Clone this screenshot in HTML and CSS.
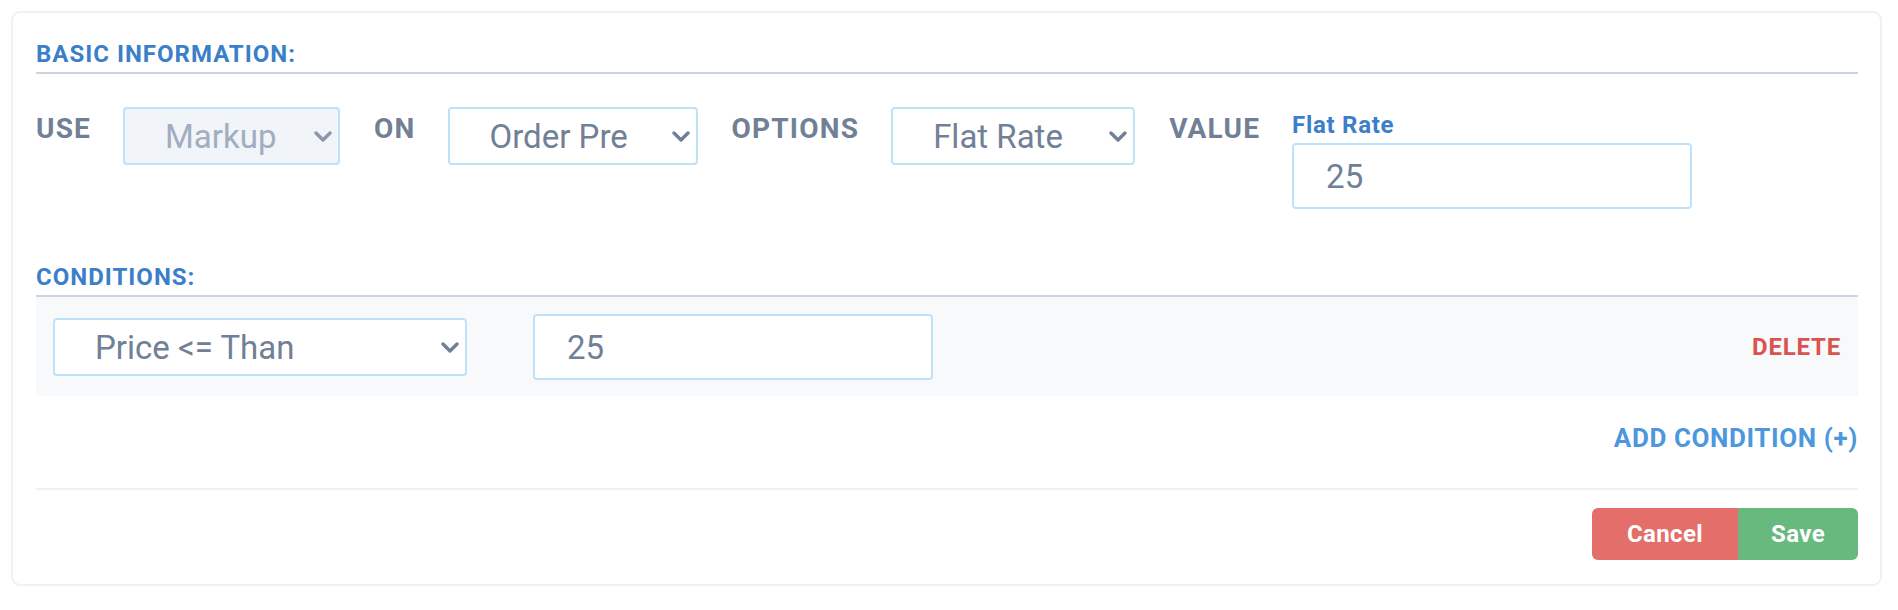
FILE: index.html
```html
<!DOCTYPE html>
<html>
<head>
<meta charset="utf-8">
<link rel="stylesheet" href="styles.css">
</head>
<body>
<div class="card">
  <div class="section-title">BASIC INFORMATION:</div>
  <div class="basic-row">
    <div class="label">USE</div>
    <div class="select select-disabled select-markup">
      <span>Markup</span>
      <svg class="chev" width="18" height="11" viewBox="0 0 18 11"><path d="M2 2 L9 9 L16 2" fill="none" stroke="currentColor" stroke-width="3.4" stroke-linecap="round" stroke-linejoin="round"/></svg>
    </div>
    <div class="label">ON</div>
    <div class="select select-on">
      <span>Order Pre</span>
      <svg class="chev" width="18" height="11" viewBox="0 0 18 11"><path d="M2 2 L9 9 L16 2" fill="none" stroke="currentColor" stroke-width="3.4" stroke-linecap="round" stroke-linejoin="round"/></svg>
    </div>
    <div class="label">OPTIONS</div>
    <div class="select select-options">
      <span>Flat Rate</span>
      <svg class="chev" width="18" height="11" viewBox="0 0 18 11"><path d="M2 2 L9 9 L16 2" fill="none" stroke="currentColor" stroke-width="3.4" stroke-linecap="round" stroke-linejoin="round"/></svg>
    </div>
    <div class="label">VALUE</div>
    <div class="value-col">
      <div class="field-label">Flat Rate</div>
      <input class="text-input" type="text" value="25">
    </div>
  </div>

  <div class="section-title conditions-title">CONDITIONS:</div>
  <div class="condition-row">
    <div class="select select-cond">
      <span>Price &lt;= Than</span>
      <svg class="chev" width="18" height="11" viewBox="0 0 18 11"><path d="M2 2 L9 9 L16 2" fill="none" stroke="currentColor" stroke-width="3.4" stroke-linecap="round" stroke-linejoin="round"/></svg>
    </div>
    <input class="text-input cond-input" type="text" value="25">
    <div class="delete">DELETE</div>
  </div>

  <div class="add-row"><span class="add-link">ADD CONDITION (+)</span></div>

  <div class="footer">
    <div class="btn-group">
      <button class="btn btn-cancel">Cancel</button>
      <button class="btn btn-save">Save</button>
    </div>
  </div>
</div>
</body>
</html>
```

FILE: styles.css
```css
* {
  box-sizing: border-box;
}

html, body {
  margin: 0;
  padding: 0;
  background: #ffffff;
}

body {
  font-family: Roboto, "Liberation Sans", Arial, sans-serif;
  color: #718096;
}

.card {
  width: 1871px;
  margin: 11px 0 0 11px;
  border: 2px solid #edf2f7;
  border-radius: 9px;
  padding: 23px 22px 24px 23px;
  background: #ffffff;
}

.section-title {
  font-size: 24px;
  font-weight: 700;
  line-height: 36px;
  letter-spacing: 1px;
  color: #3b7fc9;
  border-bottom: 2px solid #cbd5e0;
}

.basic-row {
  display: flex;
  align-items: flex-start;
  gap: 34px;
  margin-top: 33px;
}

.label {
  font-size: 28px;
  font-weight: 700;
  line-height: 28px;
  letter-spacing: 1.2px;
  color: #718096;
  margin-top: 8px;
  margin-right: -2px;
}

.select {
  display: flex;
  align-items: center;
  height: 58px;
  border: 2px solid #bee3f8;
  border-radius: 4px;
  background: #ffffff;
  padding-left: 40px;
  font-size: 33px;
  color: #718096;
  flex: none;
}

.select .chev {
  margin-left: auto;
  margin-right: 6px;
  color: #718096;
}

.select-disabled {
  background: #f1f5f9;
  color: #a0aec0;
}

.select-disabled .chev {
  color: #8c97a8;
}

.select-markup { width: 217px; }
.select-on { width: 250px; }
.select-options { width: 244px; }
.select-cond { width: 414px; }

.value-col {
  display: flex;
  flex-direction: column;
}

.field-label {
  font-size: 24px;
  font-weight: 700;
  line-height: 36px;
  letter-spacing: 0.7px;
  color: #3b7fc9;
}

.text-input {
  width: 400px;
  height: 66px;
  border: 2px solid #bee3f8;
  border-radius: 4px;
  padding: 0 0 0 32px;
  font-family: Roboto, "Liberation Sans", Arial, sans-serif;
  font-size: 33px;
  color: #718096;
  background: #ffffff;
  outline: none;
}

.conditions-title {
  margin-top: 50px;
}

.condition-row {
  display: flex;
  align-items: center;
  background: #f7f9fb;
  padding: 17px 17px 16px 17px;
}

.cond-input {
  margin-left: 66px;
}

.delete {
  margin-left: auto;
  font-size: 24px;
  font-weight: 700;
  color: #d9534f;
  line-height: 36px;
  letter-spacing: 0.8px;
}

.add-row {
  display: flex;
  justify-content: flex-end;
  margin-top: 24px;
  padding-bottom: 32px;
  border-bottom: 2px solid #edf2f7;
}

.add-link {
  font-size: 26px;
  font-weight: 700;
  line-height: 36px;
  letter-spacing: 0.6px;
  color: #4d97dd;
}

.footer {
  display: flex;
  justify-content: flex-end;
  margin-top: 18px;
}

.btn-group {
  display: flex;
  border-radius: 6px;
  overflow: hidden;
}

.btn {
  height: 52px;
  border: none;
  margin: 0;
  font-family: Roboto, "Liberation Sans", Arial, sans-serif;
  font-size: 24px;
  font-weight: 700;
  letter-spacing: 0.4px;
  color: #ffffff;
  padding: 0;
}

.btn-cancel {
  width: 146px;
  background: #e36e6a;
}

.btn-save {
  width: 120px;
  background: #68b97e;
}
```
